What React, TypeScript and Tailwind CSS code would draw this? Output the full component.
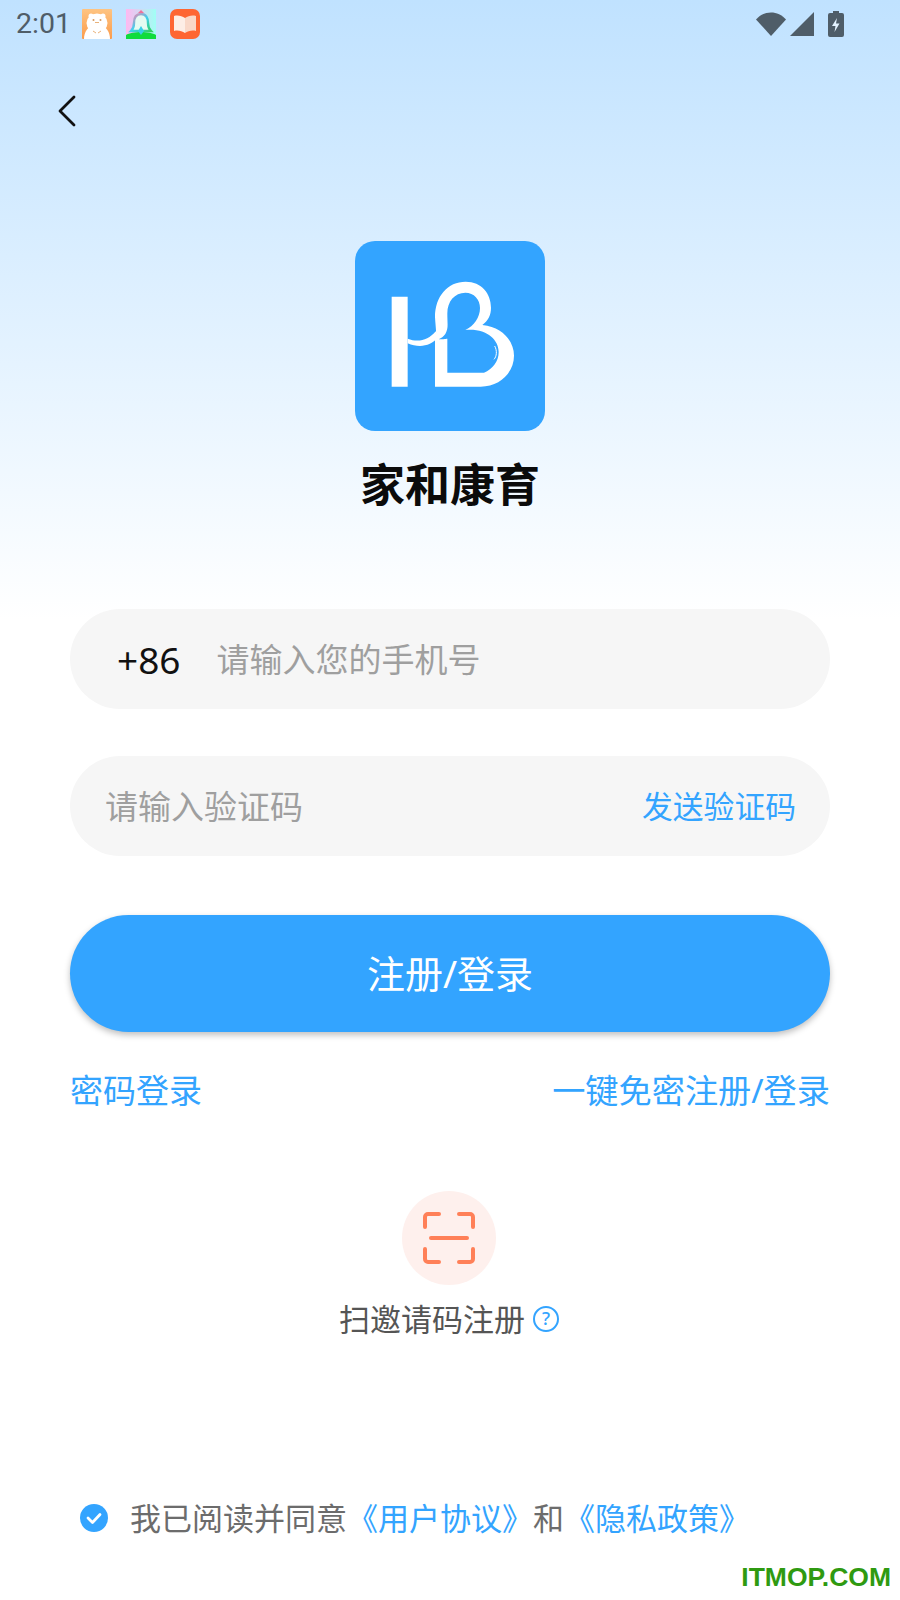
import React from "react";

const cjk = "font-['Noto_Sans','Noto_Sans_CJK_SC',sans-serif]";

const BearIcon = () => (
  <svg width="30" height="30" viewBox="0 0 30 30">
    <defs>
      <linearGradient id="bear" x1="0" y1="0" x2="0" y2="1">
        <stop offset="0" stopColor="#fec482" />
        <stop offset="1" stopColor="#fb9c4c" />
      </linearGradient>
    </defs>
    <rect width="30" height="30" rx="1" fill="url(#bear)" />
    <circle cx="9" cy="7" r="2.500" fill="#fff" />
    <circle cx="21" cy="7" r="2.500" fill="#fff" />
    <ellipse cx="15" cy="14" rx="10.500" ry="9.500" fill="#fff" />
    <path d="M2 30c0-6 3-11 7-13h12c4 2 7 7 7 13z" fill="#fff" />
    <circle cx="11.500" cy="11" r="1" fill="#d59a60" />
    <circle cx="18.500" cy="11" r="1" fill="#d59a60" />
    <path d="M13 13.500h4M11 22l3 2M19 22l-3 2" stroke="#e9b27a" strokeWidth="1" />
  </svg>
);

const BellIcon = () => (
  <svg width="30" height="30" viewBox="0 0 30 30">
    <defs>
      <linearGradient id="bellBg" x1="0" y1="0" x2="1" y2="0">
        <stop offset="0" stopColor="#ffb8f0" />
        <stop offset="1" stopColor="#a0fff5" />
      </linearGradient>
      <linearGradient id="bellLine" x1="0" y1="0" x2="1" y2="1">
        <stop offset="0" stopColor="#ff7fa8" />
        <stop offset="0.5" stopColor="#40d0f0" />
        <stop offset="1" stopColor="#30d060" />
      </linearGradient>
    </defs>
    <rect width="30" height="30" fill="url(#bellBg)" />
    <path d="M0 26c6-4 24-4 30 0v4H0z" fill="#0fdc3c" />
    <path d="M15 5c-5 0-7 4-7 9 0 4-1 6-3 8h20c-2-2-3-4-3-8 0-5-2-9-7-9z" fill="#e4fbf2" stroke="url(#bellLine)" strokeWidth="2.400" />
    <path d="M12 4h6l-3-3z" fill="#f0709a" />
    <path d="M15 17l-3 5 3 4 3-4z" fill="#38cfe8" />
  </svg>
);

const BookIcon = () => (
  <svg width="30" height="30" viewBox="0 0 30 30">
    <rect width="30" height="30" rx="7" fill="#fe6633" />
    <path d="M4 7c4-1 8 0 11 2v15c-3-2-7-3-11-2z" fill="#fdeee6" />
    <path d="M26 7c-4-1-8 0-11 2v15c3-2 7-3 11-2z" fill="#f9d8c8" />
  </svg>
);

const StatusBar = () => (
  <div className="flex h-[48px] items-center pl-[16px] pr-[56px]">
    <span className="font-['Roboto',sans-serif] text-[28.500px] leading-none text-[#4f5d68]">2:01</span>
    <div className="ml-[11px] flex gap-[14px]">
      <BearIcon />
      <BellIcon />
      <BookIcon />
    </div>
    <div className="ml-auto flex items-center gap-[3px]">
      <svg width="30" height="26" viewBox="0 0 30 26">
        <path d="M0 8.500C8-1 22-1 30 8.500L15 25z" fill="#4f5d68" />
      </svg>
      <svg width="26" height="26" viewBox="0 0 26 26">
        <path d="M25 1v24H1z" fill="#4f5d68" />
      </svg>
      <svg width="16" height="26" viewBox="0 0 16 26" className="ml-[10px]">
        <path d="M5 0h6v2h3a2 2 0 0 1 2 2v20a2 2 0 0 1-2 2H2a2 2 0 0 1-2-2V4a2 2 0 0 1 2-2h3z" fill="#4f5d68" />
        <path d="M9 7l-5 8h3.500l-1 6 5-8.500H8z" fill="#e4f3ff" />
      </svg>
    </div>
  </div>
);

const Logo = () => (
  <div className="flex h-[190px] w-[190px] items-center justify-center rounded-[20px] bg-[#33a4ff]">
    <svg width="190" height="190" viewBox="0 0 570 570">
      <path d="M110 167h48v270h-48z" fill="#fff" />
      <path d="M158 293c30 12 62 6 84-22l8 18c-24 28-58 32-92 18z" fill="#fff" />
      <path
        fillRule="evenodd"
        fill="#fff"
        d="M240 437V290c6-14 2-26 0-62 0-62 38-106 92-106 48 0 76 36 76 78 0 22-8 38-26 52 62 6 95 50 95 92 0 50-42 93-100 93zM277 395h110c26-10 44-34 44-62 0-38-38-72-100-66 26-12 44-38 44-66 0-26-18-46-44-46-32 0-54 26-54 62 0 34 4 42-6 62-6 8-12 12-20 16 14 0 26-2 26-2z"
      />
      <path d="M419 315c8 14 6 32-2 40" stroke="#fff" strokeWidth="3" fill="none" />
    </svg>
  </div>
);

const ScanIcon = () => (
  <svg width="52" height="52" viewBox="0 0 52 52" fill="none" stroke="#ff8058" strokeWidth="4" strokeLinecap="round" strokeLinejoin="round">
    <path d="M2 15V5a3 3 0 0 1 3-3h11" />
    <path d="M36 2h11a3 3 0 0 1 3 3v10" />
    <path d="M2 37v10a3 3 0 0 0 3 3h11" />
    <path d="M36 50h11a3 3 0 0 0 3-3V37" />
    <path d="M8 26h36" />
  </svg>
);

export default function App() {
  return (
    <div className={`relative h-[1600px] w-[900px] overflow-hidden bg-white bg-[linear-gradient(180deg,#c0e2ff_0px,#ffffff_620px)] ${cjk}`}>
      <StatusBar />

      <div className="pl-[58px] pt-[47px]">
        <svg width="18" height="32" viewBox="0 0 18 32" fill="none" stroke="#111" strokeWidth="2.800" strokeLinecap="round" strokeLinejoin="round">
          <path d="M16 2L2 16l14 14" />
        </svg>
      </div>

      <div className="mt-[114px] flex flex-col items-center">
        <Logo />
        <h1 className="mt-[23px] text-[45px] font-bold leading-[62px] text-[#0b0b0b]">家和康育</h1>
      </div>

      <div className="mt-[93px] flex flex-col px-[70px]">
        <div className="flex h-[100px] items-center rounded-full bg-[#f6f6f6] pl-[47px]">
          <span className="text-[37px] leading-none text-[#111]">+86</span>
          <span className="ml-[36px] text-[33px] leading-none text-[#9f9f9f]">请输入您的手机号</span>
        </div>
        <div className="mt-[47px] flex h-[100px] items-center justify-between rounded-full bg-[#f6f6f6] pl-[35px] pr-[34px]">
          <span className="text-[33px] leading-none text-[#9f9f9f]">请输入验证码</span>
          <span className="text-[30.800px] leading-none text-[#33a4ff]">发送验证码</span>
        </div>
        <button className="mt-[59px] h-[117px] rounded-full bg-[#33a4ff] text-[38px] text-white shadow-[0_3px_6px_rgba(0,0,0,0.25)]">
          注册/登录
        </button>
        <div className="mt-[39px] flex items-center justify-between text-[33.200px] leading-[40px] text-[#33a4ff]">
          <span className="text-[33px]">密码登录</span>
          <span>一键免密注册/登录</span>
        </div>
      </div>

      <div className="mt-[80px] flex flex-col items-center pr-[2px]">
        <div className="flex h-[94px] w-[94px] items-center justify-center rounded-full bg-[#fef0ed]">
          <ScanIcon />
        </div>
        <div className="mt-[14px] flex items-center gap-[8px]">
          <span className="text-[31px] leading-[40px] text-[#555]">扫邀请码注册</span>
          <svg width="26" height="26" viewBox="0 0 26 26">
            <circle cx="13" cy="13" r="12" fill="none" stroke="#33a4ff" strokeWidth="2" />
            <text x="13" y="19" textAnchor="middle" fontSize="18" fontWeight="500" fill="#33a4ff" fontFamily="Noto Sans">?</text>
          </svg>
        </div>
      </div>

      <div className="mt-[159px] flex items-center pl-[80px]">
        <svg width="28" height="28" viewBox="0 0 28 28">
          <circle cx="14" cy="14" r="14" fill="#33a4ff" />
          <path d="M8 14l4.500 4.500L20 10.500" fill="none" stroke="#fff" strokeWidth="2.800" strokeLinecap="round" strokeLinejoin="round" />
        </svg>
        <p className="ml-[22px] text-[31px] leading-[40px] text-[#6c6c6c]">
          我已阅读并同意<span className="text-[#33a4ff]">《用户协议》</span>和<span className="text-[#33a4ff]">《隐私政策》</span>
        </p>
      </div>

      <span className="absolute bottom-[8px] right-[9px] font-['Liberation_Sans',sans-serif] text-[26.500px] font-bold leading-[30px] text-[#2f9a11]">
        ITMOP.COM
      </span>
    </div>
  );
}
